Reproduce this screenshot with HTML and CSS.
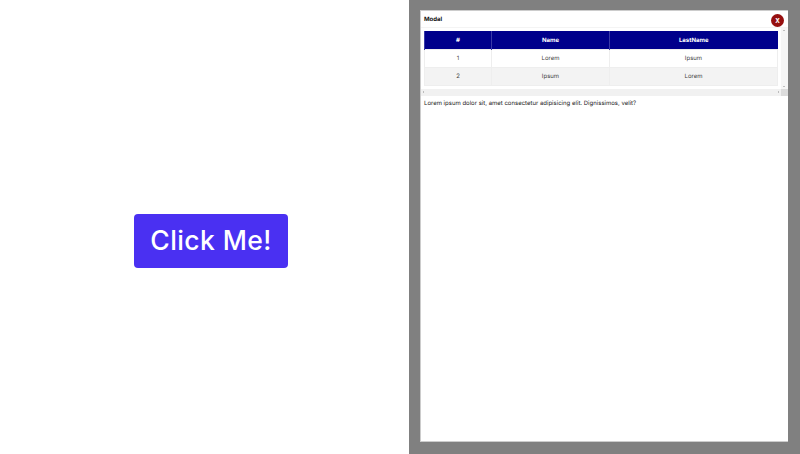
FILE: index.html
```html
<!DOCTYPE html>
<html lang="en">
<head>
    <meta charset="UTF-8">
    <meta name="viewport" content="width=device-width, initial-scale=1.0">
    <title>Modal</title>
    <link rel="stylesheet" href="styles.css">
</head>
<body>

<div class="page">
    <div class="left">
        <button type="button" class="open-btn">Click Me!</button>
    </div>

    <div class="overlay">
        <div class="modal">
            <button type="button" class="close-btn">x</button>
            <h4 class="modal-title">Modal</h4>
            <div class="table-box">
                <div class="table-wrap">
                    <table class="data-table">
                        <thead>
                            <tr>
                                <th class="col-num">#</th>
                                <th class="col-name">Name</th>
                                <th>LastName</th>
                            </tr>
                        </thead>
                        <tbody>
                            <tr>
                                <td>1</td>
                                <td>Lorem</td>
                                <td>Ipsum</td>
                            </tr>
                            <tr>
                                <td>2</td>
                                <td>Ipsum</td>
                                <td>Lorem</td>
                            </tr>
                        </tbody>
                    </table>
                </div>
                <!-- scrollbars are drawn by hand, headless hides the real ones -->
                <div class="bar-v">
                    <span class="arrow arrow-up"></span>
                    <span class="arrow arrow-down"></span>
                </div>
                <div class="bar-h">
                    <span class="arrow arrow-left"></span>
                    <span class="arrow arrow-right"></span>
                </div>
                <div class="bar-corner"></div>
            </div>
            <p class="modal-text">Lorem ipsum dolor sit, amet consectetur adipisicing elit. Dignissimos, velit?</p>
        </div>
    </div>
</div>

</body>
</html>
```

FILE: styles.css
```css
* {
    box-sizing: border-box;
}
html, body {
    margin: 0;
    height: 100%;
}
body {
    font-family: "Inter", "Open Sans", sans-serif;
    background-color: #fff;
    color: #222;
    text-rendering: geometricPrecision;
}
.page {
    display: flex;
    height: 454px;
}
.left {
    width: 409px;
    padding: 214px 0 0 134px;
}
.open-btn {
    display: block;
    width: 154px;
    height: 54px;
    padding: 0 0 2px;
    background-color: #4a30f2;
    color: #fff;
    border: none;
    border-radius: 4px;
    font-family: inherit;
    font-size: 26.5px;
    font-weight: 500;
    letter-spacing: 0.4px;
}
.overlay {
    flex: 1;
    background-color: #808080;
    padding: 10px 12px 12px 11px;
}
.modal {
    position: relative;
    height: 100%;
    background-color: #fff;
    border-top: 1px solid #ccc;
    border-left: 1px solid #ccc;
    border-bottom: 1px solid #ccc;
}
.close-btn {
    position: absolute;
    top: 3px;
    right: 4px;
    width: 13px;
    height: 13px;
    padding: 0 0 1px;
    border: none;
    border-radius: 50%;
    background-color: #960f0f;
    color: #fff;
    font-family: inherit;
    font-size: 8px;
    font-weight: 600;
    line-height: 11px;
}
.modal-title {
    margin: 0;
    height: 16px;
    padding: 5px 3px 0;
    font-size: 6px;
    font-weight: 700;
    line-height: 8px;
    color: #111;
}
.table-box {
    display: grid;
    grid-template-columns: 1fr 7px;
    grid-template-rows: 61px 7px;
    border-top: 1px solid #f4f4f4;
}
.table-wrap {
    padding: 3px 3px 0;
}
.bar-v, .bar-h {
    position: relative;
    background-color: #f1f1f1;
}
.bar-v {
    background-color: #f6f6f6;
}
.bar-corner {
    background-color: #dcdcdc;
}
.arrow {
    position: absolute;
    width: 0;
    height: 0;
    border: 1.5px solid transparent;
}
.arrow-up {
    top: 1px;
    left: 2px;
    border-bottom-color: #888;
}
.arrow-down {
    bottom: 1px;
    left: 2px;
    border-top-color: #888;
}
.arrow-left {
    top: 2px;
    left: 1px;
    border-right-color: #888;
}
.arrow-right {
    top: 2px;
    right: 1px;
    border-left-color: #888;
}
.data-table {
    width: 354px;
    border-collapse: collapse;
    table-layout: fixed;
    font-size: 6px;
    text-align: center;
}
.data-table th {
    height: 18px;
    padding: 1px 0 0;
    background-color: #00008b;
    color: #fff;
    font-weight: 700;
    border-left: 1px solid #3a3aa8;
}
.data-table td {
    height: 18px;
    padding: 0;
    color: #444;
    border: 1px solid #eee;
}
.data-table tbody tr:nth-child(even) {
    background-color: #f3f3f3;
}
.col-num {
    width: 67px;
}
.col-name {
    width: 118px;
}
.modal-text {
    margin: 0;
    padding: 4px 3px;
    font-size: 6px;
    line-height: 8px;
    color: #222;
}
```
